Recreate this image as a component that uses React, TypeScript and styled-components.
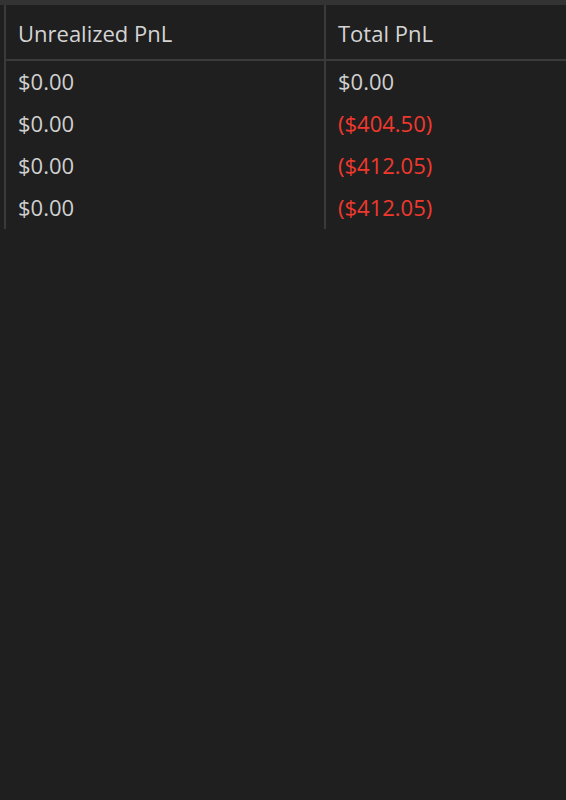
import { Fragment } from "react";
import styled, { createGlobalStyle } from "styled-components";

const GlobalStyle = createGlobalStyle`
  html, body {
    margin: 0;
    padding: 0;
    background: #1f1f1f;
    height: 100%;
  }
  #root {
    min-height: 100vh;
  }
`;

const Page = styled.div`
  min-height: 100vh;
  background: #1f1f1f;
  font-family: "Open Sans", "Noto Sans", sans-serif;
  color: #d0d0d0;
`;

const TopStrip = styled.div`
  height: 5px;
  background: #333333;
`;

const Table = styled.div`
  margin-left: 4px;
  border-left: 2px solid #3a3a3a;
  display: grid;
  grid-template-columns: 318px 1fr;
`;

const HeaderCell = styled.div<{ divider?: boolean }>`
  height: 56px;
  box-sizing: border-box;
  display: flex;
  align-items: center;
  padding: 1px 0 0 12px;
  font-size: 22px;
  color: #d4d4d4;
  border-bottom: 2px solid #3a3a3a;
  border-left: ${(p) => (p.divider ? "2px solid #3a3a3a" : "none")};
`;

const Cell = styled.div<{ divider?: boolean; negative?: boolean }>`
  height: 42px;
  box-sizing: border-box;
  display: flex;
  align-items: center;
  padding: 0 0 2px 12px;
  font-size: 22px;
  color: ${(p) => (p.negative ? "#f0392e" : "#d0d0d0")};
  border-left: ${(p) => (p.divider ? "2px solid #3a3a3a" : "none")};
`;

const rows = [
  { unrealized: "$0.00", total: "$0.00", negative: false },
  { unrealized: "$0.00", total: "($404.50)", negative: true },
  { unrealized: "$0.00", total: "($412.05)", negative: true },
  { unrealized: "$0.00", total: "($412.05)", negative: true },
];

export default function App() {
  return (
    <Page>
      <GlobalStyle />
      <TopStrip />
      <Table>
        <HeaderCell>Unrealized PnL</HeaderCell>
        <HeaderCell divider>Total PnL</HeaderCell>
        {rows.map((r, i) => (
          <Fragment key={i}>
            <Cell>{r.unrealized}</Cell>
            <Cell divider negative={r.negative}>
              {r.total}
            </Cell>
          </Fragment>
        ))}
      </Table>
    </Page>
  );
}
